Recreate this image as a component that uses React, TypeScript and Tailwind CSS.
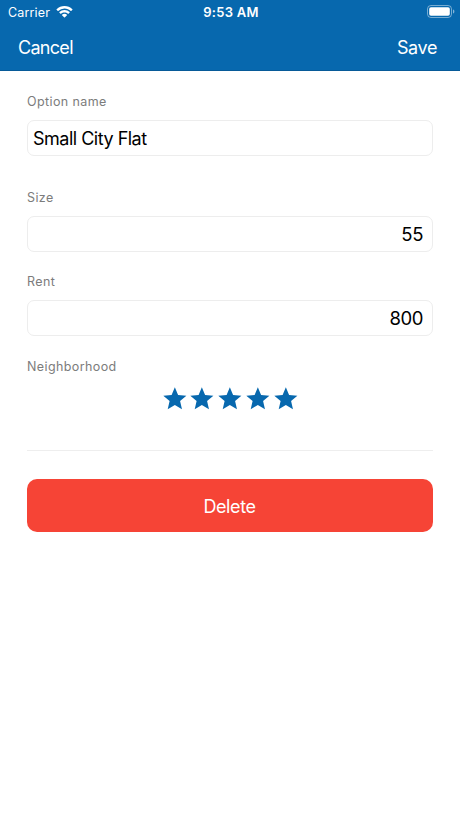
interface FieldProps {
  label: string;
  value: string;
  align?: 'left' | 'right';
}

function Label({ text }: { text: string }) {
  return <div className="h-5 pt-px text-[12.5px] leading-5 tracking-[0.4px] text-[#7c7c7c]">{text}</div>;
}

function Field({ label, value, align = 'left' }: FieldProps) {
  return (
    <div>
      <Label text={label} />
      <input
        type="text"
        defaultValue={value}
        className={`mt-[9px] block h-9 w-full rounded-[7px] border border-[#ededed] bg-white text-black outline-none ${
          align === 'right'
            ? 'pr-[9px] text-right text-[18.5px] tracking-[-0.4px]'
            : 'pl-[5px] text-[18px] tracking-[-0.5px]'
        }`}
      />
    </div>
  );
}

function WifiIcon() {
  return (
    <svg viewBox="0 0 17 12" className="h-3 w-[17px]" fill="white">
      <path d="M8.500 2.500c2.400 0 4.600.9 6.300 2.500.1.100.3.100.4 0l1.200-1.200c.2-.2.2-.4 0-.5a11.400 11.400 0 0 0-15.800 0c-.2.100-.2.300 0 .5L1.800 5c.1.100.3.100.4 0a9.100 9.100 0 0 1 6.300-2.500Z" />
      <path d="M8.500 6.400c1.300 0 2.600.5 3.500 1.400.1.100.3.100.5 0l1.200-1.300c.1-.1.100-.3 0-.4a7.500 7.500 0 0 0-10.400 0c-.1.100-.1.300 0 .4l1.200 1.300c.2.100.4.100.5 0 .9-.9 2.200-1.400 3.500-1.400Z" />
      <path d="M11 9.200c.1-.1.100-.3 0-.4a3.900 3.900 0 0 0-5 0c-.1.100-.1.300 0 .4l2.300 2.300c.1.100.3.100.4 0L11 9.200Z" />
    </svg>
  );
}

function BatteryIcon() {
  return (
    <svg viewBox="0 0 28 13" className="h-[13px] w-7" fill="none">
      <rect x="0.5" y="0.5" width="24" height="12" rx="3.4" stroke="white" strokeOpacity="0.45" />
      <rect x="2.2" y="2.2" width="20.6" height="8.6" rx="1.8" fill="white" />
      <path d="M26 4.500c.9.300 1.400 1.100 1.400 2s-.5 1.700-1.400 2Z" fill="white" fillOpacity="0.5" />
    </svg>
  );
}

function Star() {
  return (
    <svg viewBox="0 0 24 24" className="size-[27.7px]" fill="#0768ae">
      <path d="M12 17.270 18.180 21l-1.640-7.030L22 9.240l-7.190-.61L12 2 9.190 8.630 2 9.240l5.460 4.730L5.820 21z" />
    </svg>
  );
}

export default function App() {
  return (
    <div className="flex min-h-[818px] flex-col bg-white font-['Inter',sans-serif]">
      <header className="h-[71px] border-b border-[#075a98] bg-[#0768ae] text-white">
        {/* Status bar */}
        <div className="grid h-6 grid-cols-3 items-center pr-[5px] pl-2">
          <div className="flex items-center gap-[6px] text-[12.5px] tracking-[0.15px]">
            <span className="pt-[2px]">Carrier</span>
            <WifiIcon />
          </div>
          <span className="pt-px pr-px text-center text-[13px] font-semibold tracking-[0.3px]">9:53 AM</span>
          <div className="flex justify-end pb-px">
            <BatteryIcon />
          </div>
        </div>
        {/* Navigation bar */}
        <div className="flex h-[46px] items-center justify-between pr-[23px] pl-[18px] text-[18px]">
          <button className="tracking-[-0.7px]">Cancel</button>
          <button className="tracking-[-0.4px]">Save</button>
        </div>
      </header>

      <main className="px-[27px] pt-5">
        <Field label="Option name" value="Small City Flat" />
        <div className="mt-[31px]">
          <Field label="Size" value="55" align="right" />
        </div>
        <div className="mt-[19px]">
          <Field label="Rent" value="800" align="right" />
        </div>

        <div className="mt-5">
          <Label text="Neighborhood" />
          <div className="mt-[9px] flex h-7 justify-center">
            {[1, 2, 3, 4, 5].map((n) => (
              <Star key={n} />
            ))}
          </div>
        </div>

        <hr className="mt-[37px] border-[#eeeeee]" />

        <button className="mt-7 h-[53px] w-full rounded-[10px] bg-[#f64436] pt-px pr-px text-[18px] tracking-[-0.4px] text-white">
          Delete
        </button>
      </main>
    </div>
  );
}
